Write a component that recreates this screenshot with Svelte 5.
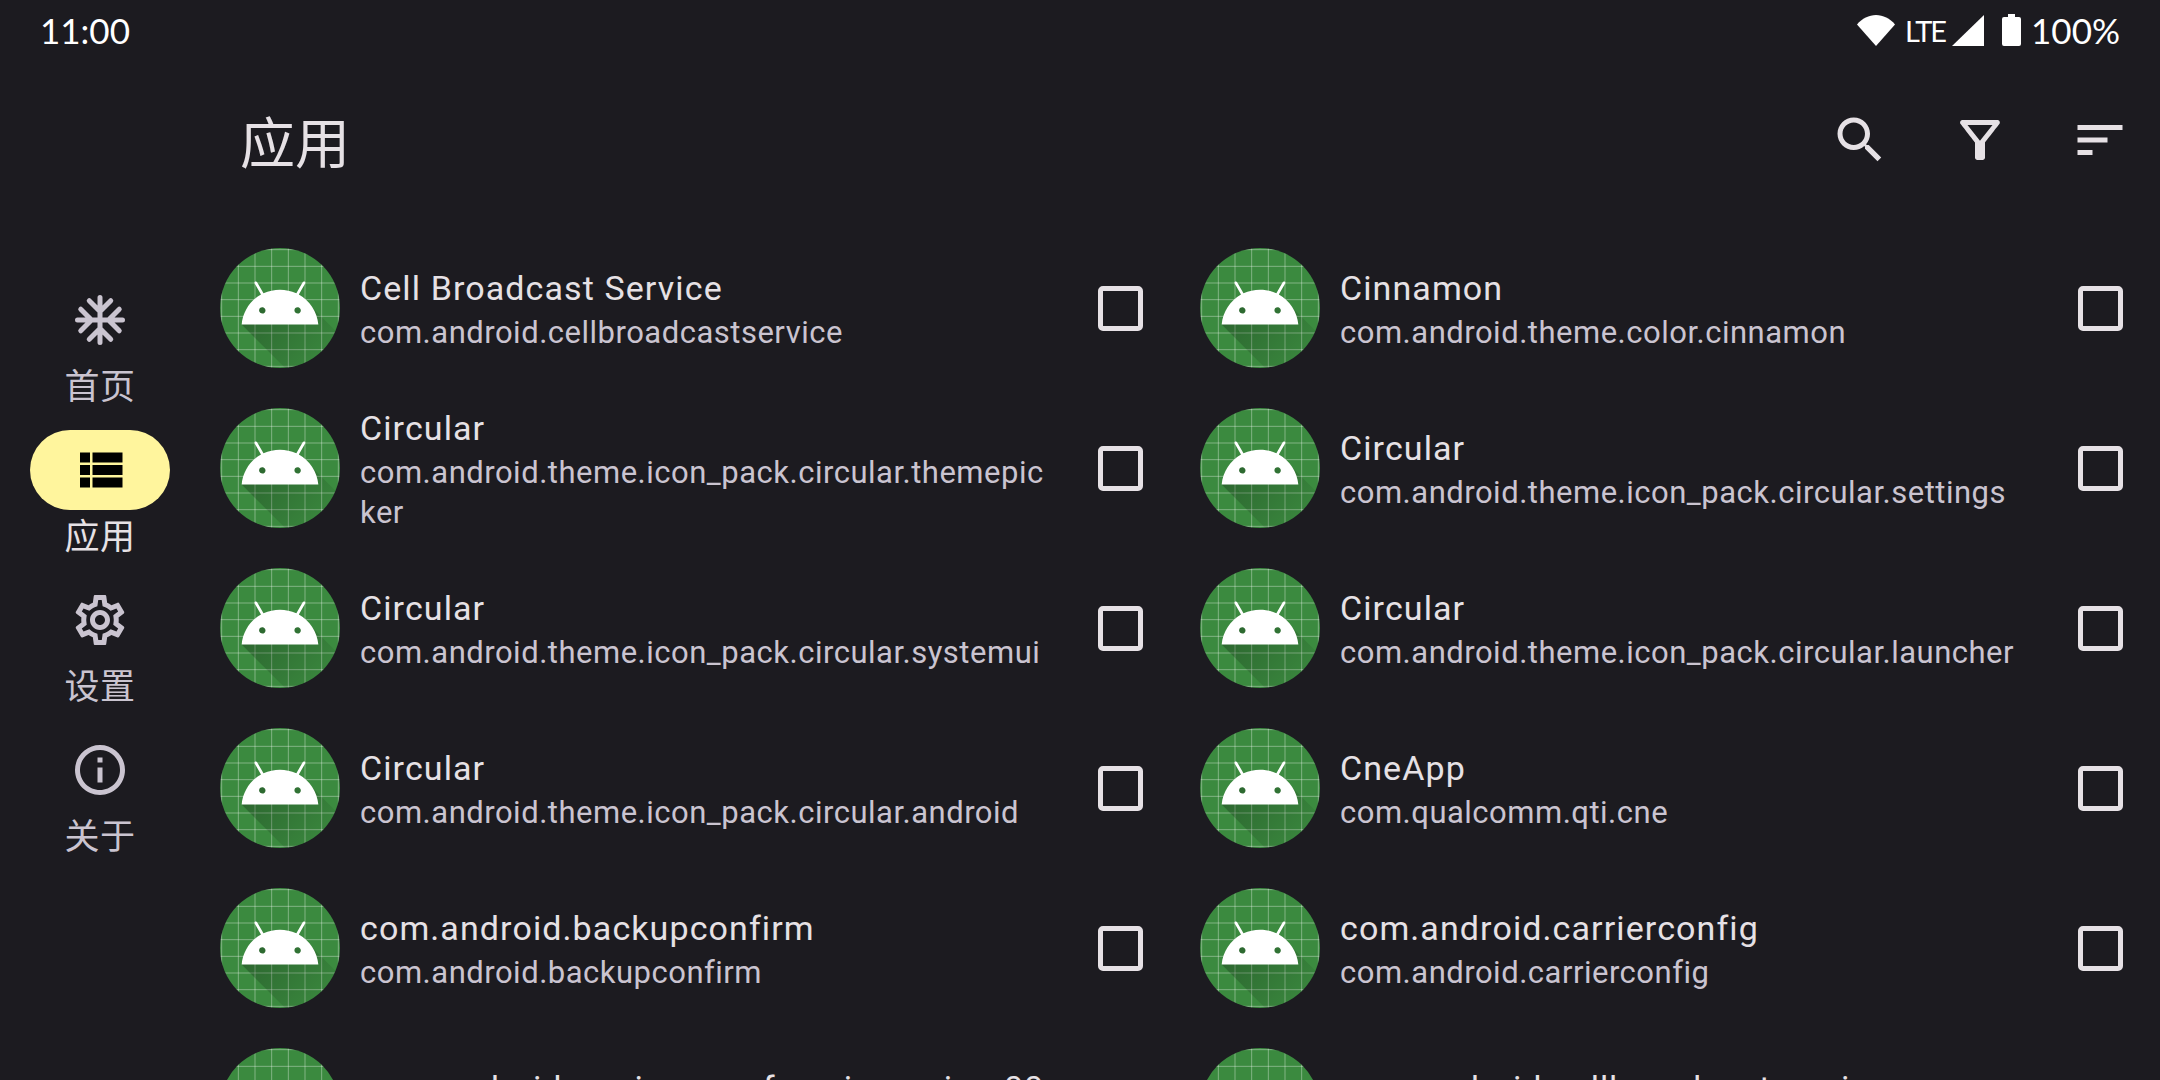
<script lang="ts">
  // App list screen: nav rail on the left, two column package list on the right
  const navItems = [
    { label: "首页", icon: "home" },
    { label: "应用", icon: "apps", active: true },
    { label: "设置", icon: "settings" },
    { label: "关于", icon: "info" },
  ];

  const apps = [
    { name: "Cell Broadcast Service", pkg: "com.android.cellbroadcastservice" },
    { name: "Cinnamon", pkg: "com.android.theme.color.cinnamon" },
    { name: "Circular", pkg: "com.android.theme.icon_pack.circular.themepicker" },
    { name: "Circular", pkg: "com.android.theme.icon_pack.circular.settings" },
    { name: "Circular", pkg: "com.android.theme.icon_pack.circular.systemui" },
    { name: "Circular", pkg: "com.android.theme.icon_pack.circular.launcher" },
    { name: "Circular", pkg: "com.android.theme.icon_pack.circular.android" },
    { name: "CneApp", pkg: "com.qualcomm.qti.cne" },
    { name: "com.android.backupconfirm", pkg: "com.android.backupconfirm" },
    { name: "com.android.carrierconfig", pkg: "com.android.carrierconfig" },
    { name: "com.android.mmims.confsmsims.mimn00", pkg: "com.android.mmims.confsmsims.mimn00" },
    { name: "com.android.cellbroadcastreceiver", pkg: "com.android.cellbroadcastreceiver" },
  ];

  const gridLines = [19, 29, 39, 49, 59, 69, 79, 89];
</script>

{#snippet androidIcon()}
  <svg class="app-icon" viewBox="18 18 72 72" aria-hidden="true">
    <defs>
      <linearGradient id="longShadow" gradientUnits="userSpaceOnUse" x1="42.9" y1="44.96" x2="85.84" y2="87.9">
        <stop offset="0" stop-color="#000" stop-opacity="0.27" />
        <stop offset="1" stop-color="#000" stop-opacity="0" />
      </linearGradient>
      <clipPath id="iconCircle"><circle cx="54" cy="54" r="36" /></clipPath>
    </defs>
    <g clip-path="url(#iconCircle)">
      <rect x="18" y="18" width="72" height="72" fill="#3b8a3f" />
      {#each gridLines as pos}
        <path d="M{pos} 0V108M0 {pos}H108" stroke="#fff" stroke-opacity="0.36" stroke-width="0.6" fill="none" />
      {/each}
      <path d="M31 63.93c0 0 6.4-11 12.1-13.1 7.2-2.6 26-1.4 26-1.4l38.1 38.1L107 108.93l-32-1z" fill="url(#longShadow)" />
      <path fill="#fff" d="M65.3 45.83l3.8-6.6c.2-.4.1-.9-.3-1.1-.4-.2-.9-.1-1.1.3l-3.9 6.7c-6.3-2.8-13.4-2.8-19.7 0l-3.9-6.7c-.2-.4-.7-.5-1.1-.3-.4.2-.5.7-.3 1.1l3.8 6.6C36.2 49.43 31.7 56.03 31 63.93h46c-.7-7.9-5.2-14.5-11.7-18.1zM43.4 57.33c-.8 0-1.5-.5-1.8-1.2-.3-.7-.1-1.5.4-2.1.5-.5 1.4-.7 2.1-.4.7.3 1.2 1 1.2 1.8 0 1-.8 1.9-1.9 1.9zm21.2 0c-.8 0-1.5-.5-1.8-1.2s-.1-1.5.4-2.1c.5-.5 1.4-.7 2.1-.4.7.3 1.2 1 1.2 1.8 0 1-.9 1.9-1.9 1.9z" />
    </g>
  </svg>
{/snippet}

<div class="screen">
  <header class="status-bar">
    <span>11:00</span>
    <div class="status-icons">
      <svg class="wifi" viewBox="0 0 38 31" aria-hidden="true">
        <path d="M0 9.5C5 3.5 12 0 19 0s14 3.5 19 9.5L19 31z" fill="#fff" />
      </svg>
      <span class="lte">LTE</span>
      <svg class="signal" viewBox="0 0 32 31" aria-hidden="true"><path d="M32 0v31H0z" fill="#fff" /></svg>
      <svg class="battery" viewBox="0 0 19 32" aria-hidden="true">
        <path d="M6 0h7v3h4a2 2 0 0 1 2 2v25a2 2 0 0 1-2 2H2a2 2 0 0 1-2-2V5a2 2 0 0 1 2-2h4z" fill="#fff" />
      </svg>
      <span>100%</span>
    </div>
  </header>

  <div class="body">
    <nav class="rail">
      {#each navItems as item}
        <div class="rail-item" class:active={item.active}>
          <div class="pill">
            <svg viewBox="0 0 24 24" aria-hidden="true">
              {#if item.icon === "home"}
                <path class="flake" d="M12 3v18M3 12h18M7.7 4.3L12 8.6l4.3-4.3M7.7 19.7L12 15.4l4.3 4.3M4.3 7.7L8.6 12l-4.3 4.3M19.7 7.7L15.4 12l4.3 4.3" />
              {:else if item.icon === "apps"}
                <path d="M4 14h4v-4H4v4zm0 5h4v-4H4v4zM4 9h4V5H4v4zm5 5h12v-4H9v4zm0 5h12v-4H9v4zM9 5v4h12V5H9z" />
              {:else if item.icon === "settings"}
                <path d="M19.43 12.98c.04-.32.07-.64.07-.98 0-.34-.03-.66-.07-.98l2.11-1.65c.19-.15.24-.42.12-.64l-2-3.46c-.09-.16-.26-.25-.44-.25-.06 0-.12.01-.17.03l-2.49 1c-.52-.4-1.08-.73-1.69-.98l-.38-2.65C14.46 2.18 14.25 2 14 2h-4c-.25 0-.46.18-.49.42l-.38 2.65c-.61.25-1.17.59-1.69.98l-2.49-1c-.06-.02-.12-.03-.18-.03-.17 0-.34.09-.43.25l-2 3.46c-.13.22-.07.49.12.64l2.11 1.65c-.04.32-.07.65-.07.98 0 .33.03.66.07.98l-2.11 1.65c-.19.15-.24.42-.12.64l2 3.46c.09.16.26.25.44.25.06 0 .12-.01.17-.03l2.49-1c.52.4 1.08.73 1.69.98l.38 2.65c.03.24.24.42.49.42h4c.25 0 .46-.18.49-.42l.38-2.65c.61-.25 1.17-.59 1.69-.98l2.49 1c.06.02.12.03.18.03.17 0 .34-.09.43-.25l2-3.46c.12-.22.07-.49-.12-.64l-2.11-1.65zm-1.98-1.71c.04.31.05.52.05.73 0 .21-.02.43-.05.73l-.14 1.13.89.7 1.08.84-.7 1.21-1.27-.51-1.04-.42-.9.68c-.43.32-.84.56-1.25.73l-1.06.43-.16 1.13-.2 1.35h-1.4l-.19-1.35-.16-1.13-1.06-.43c-.43-.18-.83-.41-1.23-.71l-.91-.7-1.06.43-1.27.51-.7-1.21 1.08-.84.89-.7-.14-1.13c-.03-.31-.05-.54-.05-.74s.02-.43.05-.73l.14-1.13-.89-.7-1.08-.84.7-1.21 1.27.51 1.04.42.9-.68c.43-.32.84-.56 1.25-.73l1.06-.43.16-1.13.2-1.35h1.39l.19 1.35.16 1.13 1.06.43c.43.18.83.41 1.23.71l.91.7 1.06-.43 1.27-.51.7 1.21-1.07.85-.89.7.14 1.13zM12 8c-2.21 0-4 1.79-4 4s1.79 4 4 4 4-1.79 4-4-1.79-4-4-4zm0 6c-1.1 0-2-.9-2-2s.9-2 2-2 2 .9 2 2-.9 2-2 2z" />
              {:else}
                <path d="M11 7h2v2h-2zm0 4h2v6h-2zm1-9C6.48 2 2 6.48 2 12s4.48 10 10 10 10-4.48 10-10S17.52 2 12 2zm0 18c-4.41 0-8-3.59-8-8s3.59-8 8-8 8 3.59 8 8-3.59 8-8 8z" />
              {/if}
            </svg>
          </div>
          <span class="rail-label">{item.label}</span>
        </div>
      {/each}
    </nav>

    <main class="content">
      <div class="top-bar">
        <h1>应用</h1>
        <div class="actions">
          <button aria-label="Search">
            <svg viewBox="0 0 24 24"><path d="M15.5 14h-.79l-.28-.27C15.41 12.59 16 11.11 16 9.5 16 5.91 13.09 3 9.5 3S3 5.91 3 9.5 5.91 16 9.5 16c1.61 0 3.09-.59 4.23-1.57l.27.28v.79l5 4.99L20.49 19l-4.99-5zm-6 0C7.01 14 5 11.99 5 9.5S7.01 5 9.5 5 14 7.01 14 9.5 11.99 14 9.5 14z" /></svg>
          </button>
          <button aria-label="Filter">
            <svg viewBox="0 0 24 24"><path d="M7 6h10l-5.01 6.3L7 6zm-2.75-.39C6.27 8.2 10 13 10 13v6c0 .55.45 1 1 1h2c.55 0 1-.45 1-1v-6s3.72-4.8 5.74-7.39c.51-.66.04-1.61-.79-1.61H5.04c-.83 0-1.3.95-.79 1.61z" /></svg>
          </button>
          <button aria-label="Sort">
            <svg viewBox="0 0 24 24"><path d="M3 18h6v-2H3v2zM3 6v2h18V6H3zm0 7h12v-2H3v2z" /></svg>
          </button>
        </div>
      </div>

      <div class="app-grid">
        {#each apps as app}
          <div class="app-row">
            {@render androidIcon()}
            <div class="app-text">
              <div class="app-name">{app.name}</div>
              <div class="app-pkg">{app.pkg}</div>
            </div>
            <span class="checkbox"></span>
          </div>
        {/each}
      </div>
    </main>
  </div>
</div>

<style>
  :global(body) {
    margin: 0;
    background: #1c1b20;
  }

  .screen {
    width: 2160px;
    height: 1080px;
    overflow: hidden;
    background: #1c1b20;
    color: #e6e1e5;
    font-family: Roboto, "Noto Sans CJK SC", sans-serif;
    display: flex;
    flex-direction: column;
  }

  .status-bar {
    height: 60px;
    flex: none;
    padding: 0 40px;
    box-sizing: border-box;
    display: flex;
    justify-content: space-between;
    align-items: center;
    color: #fff;
    font-family: Lato, sans-serif;
    font-size: 35px;
  }

  .status-icons {
    display: flex;
    align-items: center;
  }

  .wifi {
    width: 38px;
    height: 31px;
    margin-right: 11px;
  }

  .lte {
    font-size: 29px;
    width: 41px;
    letter-spacing: -2px;
    margin: 0 6px 0 -1px;
  }

  .signal {
    width: 32px;
    height: 31px;
    margin-right: 18px;
  }

  .battery {
    width: 19px;
    height: 32px;
    margin-right: 10px;
  }

  .body {
    flex: 1;
    display: flex;
    min-height: 0;
  }

  .rail {
    width: 200px;
    flex: none;
    display: flex;
    flex-direction: column;
    justify-content: center;
    fill: #cac4d0;
    color: #cac4d0;
  }

  .rail-item {
    height: 150px;
    padding-top: 10px;
    box-sizing: border-box;
    display: flex;
    flex-direction: column;
    align-items: center;
  }

  .pill {
    width: 140px;
    height: 80px;
    border-radius: 40px;
    display: flex;
    align-items: center;
    justify-content: center;
  }

  .pill svg {
    width: 60px;
    height: 60px;
  }

  .flake {
    fill: none;
    stroke: #cac4d0;
    stroke-width: 2;
    stroke-linecap: round;
    stroke-linejoin: round;
  }

  .rail-item.active .pill {
    background: #fff59d;
    fill: #000;
  }

  .rail-item.active .rail-label {
    color: #e6e1e5;
  }

  .rail-label {
    margin-top: 8px;
    font-size: 35px;
    line-height: 40px;
    letter-spacing: 0.5px;
  }

  .content {
    flex: 1;
    min-width: 0;
  }

  .top-bar {
    height: 160px;
    padding: 0 0 0 40px;
    display: flex;
    align-items: center;
    justify-content: space-between;
  }

  h1 {
    margin: 0 0 3px;
    font-size: 55px;
    font-weight: 400;
  }

  .actions {
    display: flex;
  }

  .actions button {
    width: 120px;
    height: 120px;
    padding: 0;
    border: none;
    background: none;
    display: flex;
    align-items: center;
    justify-content: center;
    fill: #e6e1e5;
  }

  .actions svg {
    width: 60px;
    height: 60px;
  }

  .app-grid {
    padding-top: 8px;
    display: grid;
    grid-template-columns: 980px 980px;
  }

  .app-row {
    height: 160px;
    padding: 0 37px 0 20px;
    display: flex;
    align-items: center;
    box-sizing: border-box;
  }

  .app-icon {
    width: 120px;
    height: 120px;
    flex: none;
    margin-right: 20px;
  }

  .app-text {
    width: 694px;
    flex: none;
    padding-top: 1px;
  }

  .app-name {
    font-size: 34px;
    line-height: 48px;
    letter-spacing: 1.1px;
  }

  .app-pkg {
    margin-top: 1px;
    font-size: 31px;
    line-height: 40px;
    letter-spacing: 0.5px;
    color: #cac4d0;
    overflow-wrap: anywhere;
  }

  .checkbox {
    width: 45px;
    height: 45px;
    margin-left: auto;
    box-sizing: border-box;
    border: 5px solid #e6e1e5;
    border-radius: 5px;
  }
</style>
